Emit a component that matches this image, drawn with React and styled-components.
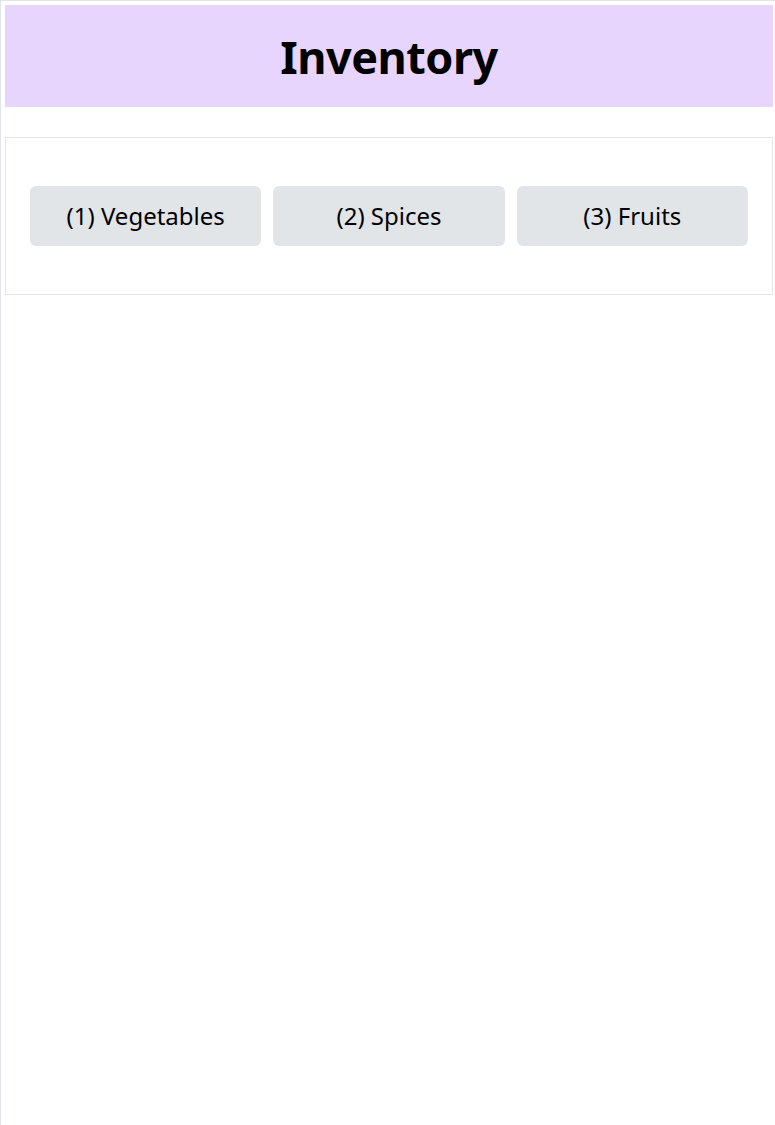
import React from "react";
import styled, { createGlobalStyle } from "styled-components";

const GlobalStyle = createGlobalStyle`
  html, body {
    margin: 0;
    padding: 0;
    background: #ffffff;
  }
  body {
    font-family: "Noto Sans", "Open Sans", sans-serif;
    color: #000;
  }
`;

const Page = styled.div`
  min-height: 1125px;
  box-sizing: border-box;
  border-left: 1px solid #e1e4e8;
  border-top: 1px solid #e1e4e8;
  padding: 4px 2px 0 4px;
`;

const Header = styled.header`
  height: 102px;
  background: #e8d5fd;
  display: flex;
  align-items: center;
  justify-content: center;
`;

const Title = styled.h1`
  margin: 0;
  font-size: 45px;
  font-weight: 700;
  letter-spacing: -0.5px;
`;

const Card = styled.section`
  margin-top: 30px;
  border: 1px solid #e4e6e9;
  padding: 48px 24px;
  display: grid;
  grid-template-columns: repeat(3, 1fr);
  gap: 12px;
`;

const CategoryButton = styled.button`
  height: 60px;
  border: none;
  border-radius: 6px;
  background: #e2e5e8;
  font-family: inherit;
  font-size: 24px;
  color: #000;
  cursor: pointer;
  padding: 0 0 2px;
`;

const categories = ["Vegetables", "Spices", "Fruits"];

export default function App() {
  return (
    <>
      <GlobalStyle />
      <Page>
        <Header>
          <Title>Inventory</Title>
        </Header>
        <Card>
          {categories.map((c, i) => (
            <CategoryButton key={c}>({i + 1}) {c}</CategoryButton>
          ))}
        </Card>
      </Page>
    </>
  );
}
